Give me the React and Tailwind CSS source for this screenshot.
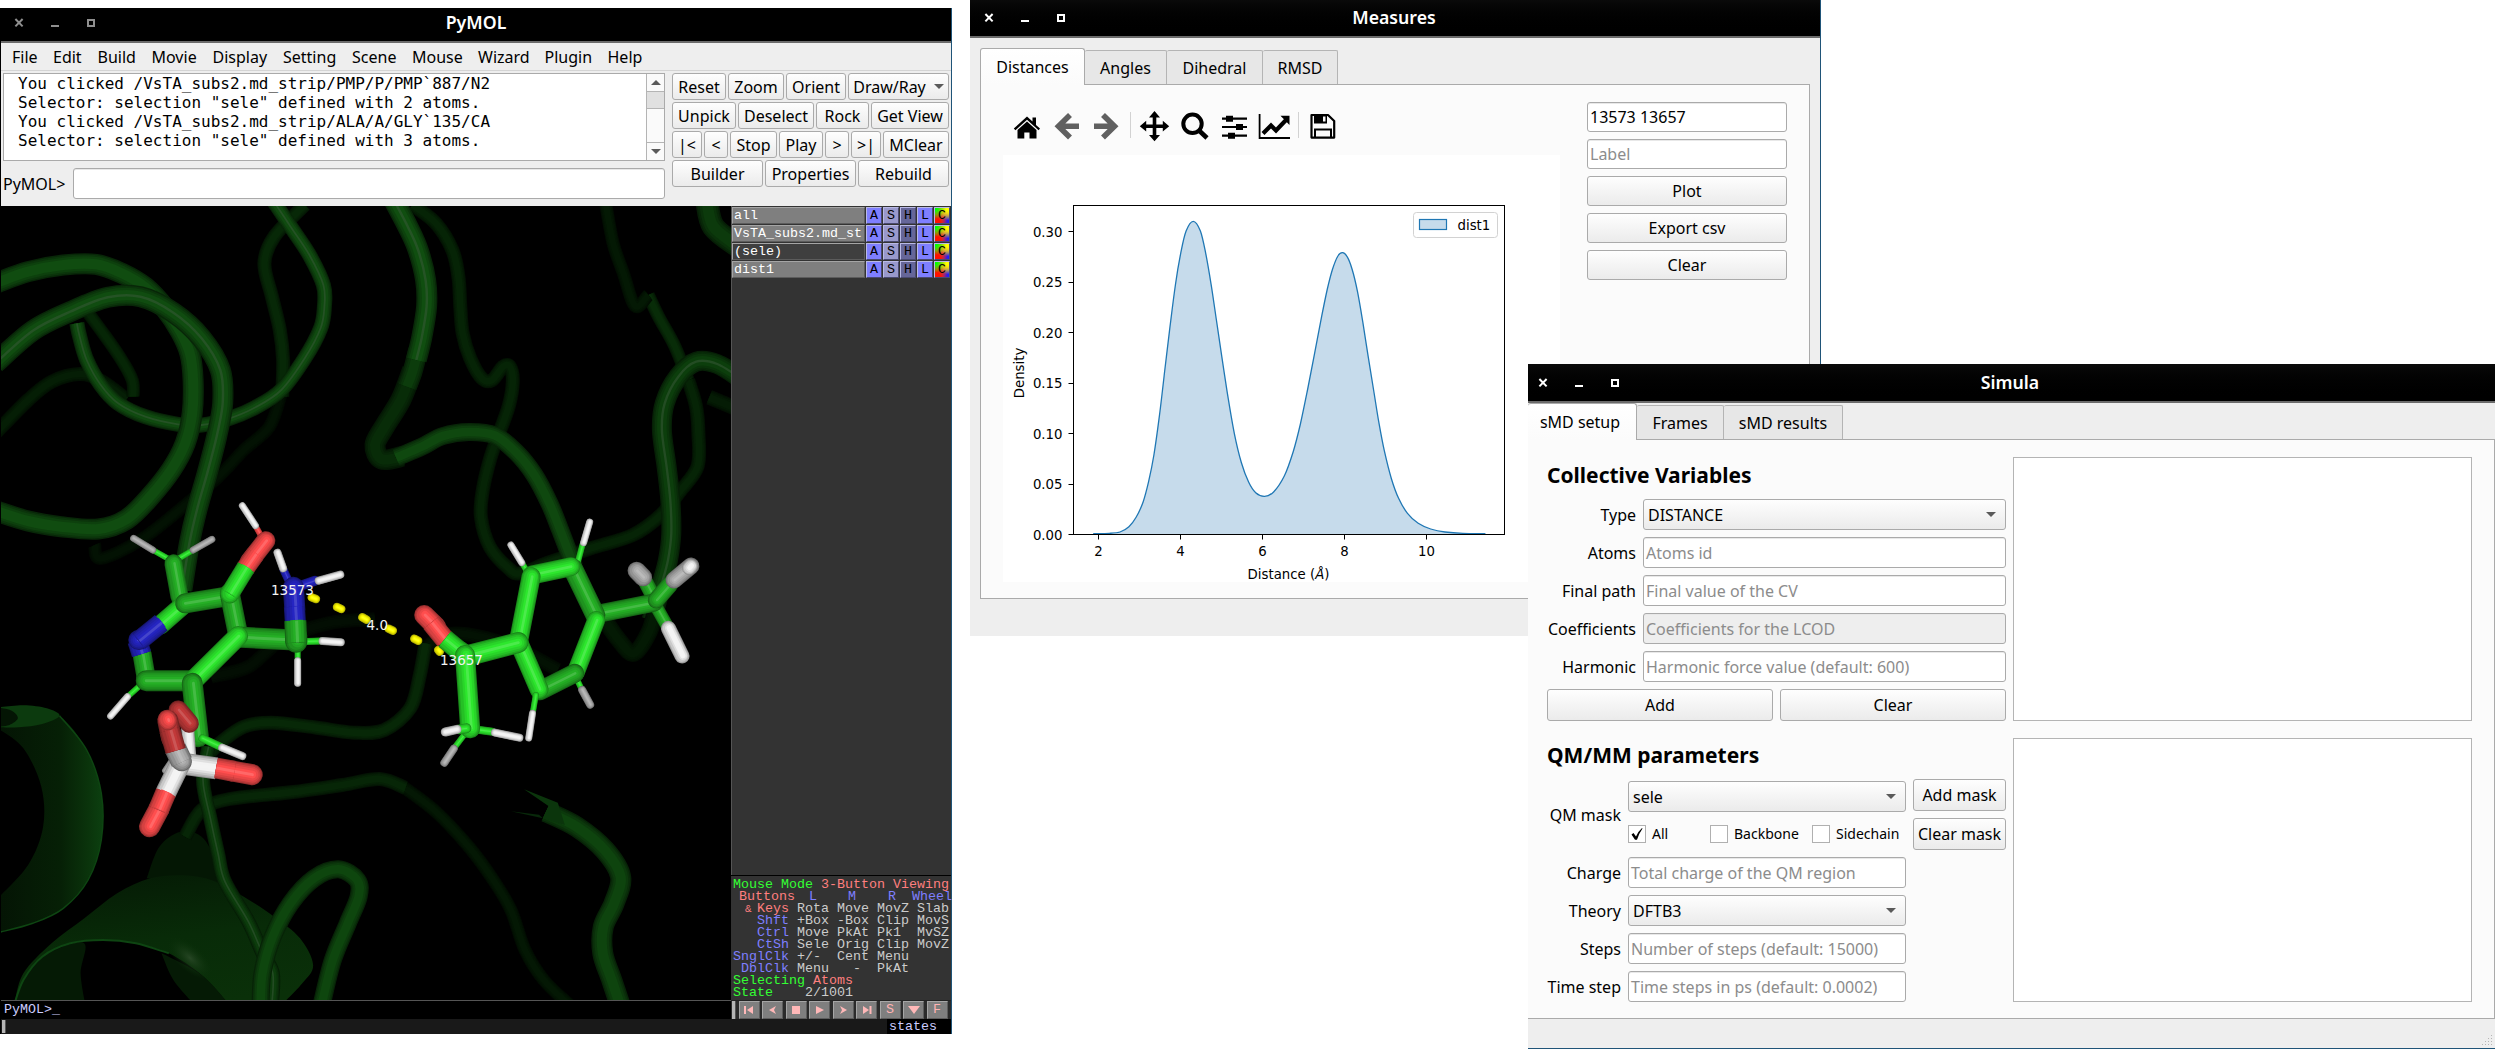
import React from "react";

/* ---------- shared widgets ---------- */

const bevel = "border border-[#aaaaaa] rounded-[3px] bg-gradient-to-b from-[#fefefe] to-[#ebebeb]";

function Button({ className = "", children }) {
  return (
    <button className={`flex items-center justify-center whitespace-nowrap leading-none ${bevel} ${className}`}>
      {children}
    </button>
  );
}

function Field({ className = "", value, placeholder, disabled }) {
  return (
    <div
      className={`flex items-center rounded-[3px] border border-[#aaaaaa] pl-[2px] leading-none whitespace-nowrap shadow-[inset_0_1px_0_#e8e8e8] ${
        disabled ? "bg-[#eeeeee]" : "bg-white"
      } ${className}`}
    >
      {value ? <span>{value}</span> : <span className="text-[#8c8c8c]">{placeholder}</span>}
    </div>
  );
}

function Caret({ up }) {
  return (
    <svg width="10" height="5" viewBox="0 0 10 5" className="shrink-0">
      <path d={up ? "M0 5 L5 0 L10 5Z" : "M0 0 L5 5 L10 0Z"} fill="#5a5a5a" />
    </svg>
  );
}

function Combo({ className = "", children }) {
  return (
    <div className={`flex items-center justify-between pl-[4px] pr-[9px] leading-none ${bevel} ${className}`}>
      <span>{children}</span>
      <Caret />
    </div>
  );
}

function TitleBar({ title, className, color = "#ffffff", icons = "left-[13px]" }) {
  return (
    <div className={`relative flex shrink-0 items-center justify-center border-b-2 border-[#6b6b6b] ${className}`}>
      <svg width="90" height="12" viewBox="0 0 90 12" className={`absolute ${icons}`}>
        <g fill="none" stroke={color}>
          <path d="M2.4 2 L9.6 9.4 M9.6 2 L2.4 9.4" strokeWidth="2" />
          <path d="M38 9 H46" strokeWidth="2" />
          <rect x="75" y="3" width="6" height="6" strokeWidth="2" />
        </g>
      </svg>
      <span className="text-[17.7px] leading-none font-semibold text-white">{title}</span>
    </div>
  );
}

function Tab({ active, className = "", children }) {
  return active ? (
    <div
      className={`relative z-10 flex h-[37px] items-center justify-center self-end rounded-t-[3px] border border-b-0 border-[#aaaaaa] bg-gradient-to-b from-white to-[#fbfbfb] leading-none ${className}`}
    >
      {children}
    </div>
  ) : (
    <div
      className={`flex h-[35px] items-center justify-center self-end rounded-t-[2px] border border-l-0 border-[#b4b4b4] border-b-[#aaaaaa] bg-[#e7e7e7] pt-px leading-none ${className}`}
    >
      {children}
    </div>
  );
}

/* ---------- molecular scene ---------- */

const U = 0.46875;
const at = ([u, v]) => [u * U, v / 3];
const lo = (pts) => pts.map(([u, v]) => [u, v + 1080]);

function spline(points) {
  const p = points.map(at);
  let d = `M${p[0][0].toFixed(1)} ${p[0][1].toFixed(1)}`;
  for (let i = 0; i < p.length - 1; i++) {
    const a = p[i - 1] || p[i];
    const b = p[i];
    const c = p[i + 1];
    const e = p[i + 2] || c;
    d += ` C${(b[0] + (c[0] - a[0]) / 6).toFixed(1)} ${(b[1] + (c[1] - a[1]) / 6).toFixed(1)} ${(
      c[0] - (e[0] - b[0]) / 6
    ).toFixed(1)} ${(c[1] - (e[1] - b[1]) / 6).toFixed(1)} ${c[0].toFixed(1)} ${c[1].toFixed(1)}`;
  }
  return d;
}

const rgb = (c, k) => `rgb(${c.map((x) => Math.min(255, Math.round(x * k))).join(",")})`;

function Tube({ pts, w, c = [16, 76, 16], shine, cap = "butt" }) {
  const d = spline(pts);
  return (
    <g fill="none" strokeLinejoin="round" strokeLinecap={cap}>
      <path d={d} stroke={rgb(c, 0.5)} strokeWidth={w} />
      <path d={d} stroke={rgb(c, 0.68)} strokeWidth={w * 0.87} />
      <path d={d} stroke={rgb(c, 0.84)} strokeWidth={w * 0.7} />
      <path d={d} stroke={rgb(c, 1)} strokeWidth={w * 0.48} />
      {shine && <path d={d} stroke="#3a5a3a" strokeOpacity="0.5" strokeWidth={w * 0.12} />}
    </g>
  );
}

const G = [44, 226, 44];
const GD = [36, 172, 36];
const RED = [250, 76, 76];
const RD = [190, 56, 56];
const BL = [36, 36, 190];
const WH = [238, 238, 238];
const GR = [172, 172, 172];

function Stick({ a, b, c, w = 18, cap = "round" }) {
  const [[x1, y1], [x2, y2]] = lo([a, b]).map(at);
  const len = Math.hypot(x2 - x1, y2 - y1) || 1;
  const ox = (Math.abs(y2 - y1) / len) * w * 0.06;
  const line = (k, f, o = 0) => (
    <line x1={x1 + o} y1={y1 - o / 2} x2={x2 + o} y2={y2 - o / 2} stroke={rgb(c, k)} strokeWidth={w * f} strokeLinecap={cap} />
  );
  return (
    <g>
      {line(0.6, 1)}
      {line(0.74, 0.9)}
      {line(0.85, 0.76)}
      {line(0.94, 0.58, ox)}
      {line(1.02, 0.36, ox)}
      <line x1={x1 + ox} y1={y1} x2={x2 + ox} y2={y2} stroke="#fff" strokeOpacity="0.15" strokeWidth={w * 0.14} strokeLinecap={cap} />
    </g>
  );
}

const backTubes = [
  { w: 14, c: [5, 30, 5], pts: [[-10, 700], [60, 600], [110, 545], [170, 522], [215, 542], [270, 598]] },
  { w: 13, c: [6, 38, 6], pts: [[165, 295], [215, 390], [255, 470], [282, 540], [284, 590]] },
  { w: 13, c: [3, 18, 3], pts: [[600, 580], [575, 680], [520, 750], [470, 825], [400, 910], [300, 1020], [215, 1075], [202, 1035]] },
  { w: 14, c: [7, 40, 7], pts: [[650, 15], [585, 110], [564, 190], [580, 290], [597, 390], [604, 480], [602, 590]] },
  { w: 14, c: [6, 36, 6], pts: [[880, 15], [930, 70], [965, 150], [978, 230], [982, 320], [987, 400], [1003, 475], [1028, 535], [1050, 540], [1073, 500], [1088, 500], [1094, 545], [1085, 620], [1062, 710], [1045, 780], [1030, 870], [1026, 950], [1045, 1040], [1085, 1105], [1110, 1120], [1170, 1088], [1260, 1045], [1350, 1005], [1410, 945], [1450, 875], [1488, 800], [1490, 700], [1485, 620], [1468, 540]] },
  { w: 13, c: [8, 44, 8], pts: [[1468, 540], [1440, 440], [1405, 350], [1383, 285]] },
  { w: 13, c: [4, 25, 4], pts: [[1383, 285], [1355, 318], [1330, 220], [1308, 130], [1292, 10]] },
  { w: 15, c: [5, 28, 5], pts: [[1513, 592], [1575, 628]] },
  { w: 23, c: [12, 58, 12], pts: [[1508, 5], [1522, 80], [1575, 140]] },
  { w: 14, c: [3, 14, 3], pts: lo([[450, 350], [530, 320], [600, 240], [700, 190], [800, 178]]) },
  { w: 14, c: [3, 18, 3], pts: lo([[900, 270], [960, 222], [1040, 235], [1110, 270], [1190, 330]]) },
];

const midTubes = [
  { w: 15, c: [16, 74, 16], shine: true, pts: [[582, 0], [620, 80], [660, 165], [690, 255], [692, 320], [684, 385], [650, 475], [600, 570], [545, 622], [490, 655], [430, 675], [380, 673], [310, 650], [252, 610], [215, 555], [185, 480], [170, 410], [164, 370]] },
  { w: 21, pts: [[-10, 250], [60, 215], [135, 195], [205, 193], [260, 220], [310, 262], [352, 325], [385, 395], [405, 460], [412, 540], [410, 640], [395, 730], [365, 810], [320, 890], [270, 958], [210, 987], [130, 980], [60, 963], [-10, 932]] },
  { w: 21, shine: true, pts: [[-10, 490], [70, 392], [150, 335], [230, 292], [300, 290], [370, 338], [430, 415], [470, 510], [475, 610], [462, 710], [442, 820], [420, 930], [404, 1030], [388, 1170]] },
  { w: 21, c: [8, 44, 8], pts: [[880, 510], [855, 600], [820, 680], [800, 735], [815, 778], [860, 768]] },
  { w: 20, c: [12, 60, 12], pts: [[892, 450], [880, 515], [868, 560]] },
  { w: 21, c: [16, 78, 16], shine: true, pts: [[840, 0], [870, 80], [892, 150], [908, 240], [910, 320], [900, 410], [888, 480]] },
  { w: 18, c: [15, 72, 15], pts: [[845, 773], [900, 740], [945, 708], [1000, 696], [1055, 706], [1100, 755], [1140, 825], [1172, 910], [1195, 990], [1225, 1100]] },
  { w: 20, c: [12, 62, 12], shine: true, pts: [[1580, 535], [1530, 492], [1485, 485], [1447, 530], [1418, 610], [1412, 690], [1422, 800], [1430, 900], [1432, 1000], [1425, 1080], [1410, 1160], [1390, 1260]] },
  { w: 17, c: [4, 26, 4], pts: lo([[1290, 180], [1320, 240], [1352, 280], [1385, 215], [1400, 140]]) },
];

const lowTubes = [
  { w: 13, c: [4, 24, 4], pts: [[860, 680], [930, 755], [1000, 860], [1050, 955], [1090, 1050], [1120, 1170], [1160, 1260], [1215, 1335]] },
  { w: 14, c: [7, 38, 7], pts: [[395, 830], [430, 750], [490, 717], [620, 697], [730, 675], [810, 657], [865, 684]] },
  { w: 14, c: [7, 40, 7], pts: [[908, 250], [895, 350], [875, 445], [820, 510], [755, 518], [670, 502], [580, 488], [520, 500], [470, 548], [440, 590]] },
  { w: 14, c: [12, 60, 12], shine: true, pts: [[445, 560], [433, 660], [448, 770], [465, 880], [480, 965], [530, 1085], [560, 1180], [582, 1240], [580, 1335]] },
  { w: 18, c: [14, 70, 14], pts: [[556, 1335], [560, 1240], [582, 1130], [620, 1030], [670, 955], [722, 928], [762, 960], [765, 1010], [742, 1090], [710, 1200], [686, 1335]] },
  { w: 21, c: [14, 68, 14], pts: [[1165, 755], [1230, 800], [1290, 870], [1324, 950], [1310, 1030], [1287, 1100], [1286, 1180], [1305, 1260], [1324, 1340]] },
];

const sticks = [
  /* pyridoxamine ring */
  [[370, 5], [326, -30], G, 6], [[326, -30], [285, -65], GR, 7],
  [[370, 5], [412, -30], G, 6], [[412, -30], [452, -62], GR, 7],
  [[370, 10], [383, 110], GD, 18],
  [[300, 375], [272, 410], G, 6], [[272, 410], [236, 468], WH, 7],
  [[312, 355], [303, 282], GD, 19],
  [[395, 130], [342, 195], G, 19],
  [[302, 282], [293, 242], BL, 20, "butt"], [[295, 240], [298, 240], BL, 20], [[296, 243], [344, 188], BL, 20, "butt"],
  [[395, 130], [490, 108], GD, 20],
  [[312, 362], [408, 362], GD, 21],
  [[548, -95], [558, -70], RED, 6], [[517, -163], [545, -103], WH, 7],
  [[532, 5], [567, -58], RED, 19], [[523, 26], [545, -18], RED, 19, "butt"],
  [[490, 100], [508, 225], GD, 20],
  [[490, 100], [490, 102], G, 19], [[490, 102], [525, 22], G, 19, "butt"],
  [[605, 30], [615, 60], BL, 8], [[592, -22], [604, 25], WH, 8],
  [[640, 78], [672, 62], BL, 10], [[680, 62], [726, 44], WH, 8],
  [[640, 245], [685, 243], G, 7], [[688, 243], [727, 247], WH, 8],
  [[635, 255], [635, 300], G, 6], [[635, 302], [635, 370], WH, 7],
  [[515, 232], [628, 240], GD, 21],
  [[629, 150], [626, 82], BL, 21], [[630, 185], [628, 140], BL, 21, "butt"],
  [[632, 245], [632, 230], GD, 22], [[632, 248], [630, 182], GD, 22, "butt"],
  [[508, 228], [412, 362], G, 20],
  [[410, 370], [423, 530], GD, 21],
  [[432, 535], [470, 560], G, 8], [[474, 563], [517, 588], WH, 8],
  /* phosphate */
  [[352, 632], [365, 605], GR, 6],
  [[400, 500], [405, 595], WH, 13, "butt"],
  [[380, 450], [404, 490], RD, 19],
  [[385, 610], [462, 625], WH, 22, "butt"], [[495, 633], [538, 644], RED, 21], [[461, 624], [500, 634], RED, 21, "butt"],
  [[388, 600], [353, 700], WH, 21, "butt"], [[340, 745], [319, 800], RED, 21], [[354, 697], [338, 750], RED, 21, "butt"],
  [[384, 600], [388, 604], GR, 20], [[374, 565], [388, 606], GR, 22, "butt"],
  [[358, 482], [366, 535], RD, 21], [[362, 510], [375, 572], RD, 21, "butt"], [[357, 478], [358, 482], RED, 19],
  /* substrate ring */
  [[1130, 48], [1115, 12], G, 6], [[1113, 8], [1090, -45], WH, 7],
  [[1232, 10], [1243, -48], G, 6], [[1245, -52], [1258, -114], WH, 7],
  [[1228, 350], [1240, 385], G, 6], [[1242, 390], [1259, 434], GR, 8],
  [[1388, 95], [1376, 62], GD, 15], [[1372, 52], [1358, 32], GR, 18],
  [[1398, 135], [1422, 195], GD, 13], [[1426, 205], [1455, 288], WH, 15],
  [[1280, 160], [1395, 128], GD, 18],
  [[1400, 120], [1428, 75], GD, 17], [[1438, 60], [1474, 18], GR, 17], [[1470, 24], [1474, 18], WH, 14],
  [[1222, 25], [1270, 165], GD, 20],
  [[1135, 45], [1218, 20], G, 19],
  [[1272, 180], [1228, 338], G, 18],
  [[1226, 340], [1152, 392], GD, 19],
  [[1133, 50], [1106, 245], G, 19],
  [[1106, 245], [1150, 388], G, 19],
  [[1143, 405], [1137, 455], G, 6], [[1136, 460], [1128, 534], WH, 7],
  [[1105, 248], [995, 288], G, 21],
  [[930, 200], [905, 165], RED, 20], [[950, 240], [920, 188], RED, 20, "butt"],
  [[988, 280], [980, 272], G, 20], [[988, 282], [949, 237], G, 20, "butt"],
  [[990, 525], [970, 562], G, 6], [[968, 566], [948, 608], GR, 8],
  [[1012, 508], [1050, 515], G, 8], [[1056, 518], [1108, 533], WH, 8],
  [[992, 285], [1003, 505], G, 20],
  [[995, 505], [980, 508], G, 10], [[975, 508], [950, 516], WH, 9],
];

const dashes = [
  [[665, 112], [674, 117]], [[719, 141], [728, 147]], [[773, 172], [782, 179]],
  [[829, 206], [838, 212]], [[884, 236], [892, 242]], [[935, 270], [938, 275]],
];

function MoleculeScene() {
  return (
    <svg width="730" height="794" viewBox="1 6 730 794" className="block bg-black">
      <defs>
        <linearGradient id="helixLeft" x1="0" x2="1" y1="0" y2="0">
          <stop offset="0" stopColor="#041404" />
          <stop offset="0.6" stopColor="#062006" />
          <stop offset="0.85" stopColor="#0a330b" />
          <stop offset="1" stopColor="#0c4010" />
        </linearGradient>
        <linearGradient id="helixBottom" x1="0.3" x2="0.6" y1="0" y2="1">
          <stop offset="0" stopColor="#051b05" />
          <stop offset="0.5" stopColor="#082b08" />
          <stop offset="1" stopColor="#0a3009" />
        </linearGradient>
        <radialGradient id="helixGlow">
          <stop offset="0" stopColor="#264624" />
          <stop offset="1" stopColor="#0a3009" stopOpacity="0" />
        </radialGradient>
      </defs>

      {backTubes.map((t, i) => <Tube key={i} {...t} />)}
      {midTubes.map((t, i) => <Tube key={i} {...t} />)}

      {/* helix on the left edge */}
      <path
        d={`${spline(lo([[-5, 445], [60, 438], [127, 467], [185, 570], [216, 700], [216, 840], [188, 960], [135, 1045], [70, 1090], [-5, 1118]]))} L-2 697 ${spline(
          lo([[-5, 1015], [60, 915], [92, 800], [88, 680], [50, 565], [-5, 505]])
        ).replace("M", "L")} Z`}
        fill="url(#helixLeft)"
      />
      <path d={`${spline(lo([[127, 467], [185, 570], [216, 700], [216, 840], [188, 960], [135, 1045], [70, 1090], [-5, 1118]]))}`} fill="none" stroke="#0e4512" strokeWidth="1.5" />
      <path d={`${spline(lo([[-5, 442], [50, 436], [100, 445], [127, 467], [90, 492], [40, 502], [-5, 502]]))} Z`} fill="#0c3a0e" />
      <path d={`${spline(lo([[-5, 442], [25, 452], [38, 475], [20, 495], [-5, 500]]))} Z`} fill="#041504" />

      {/* helix at the bottom */}
      <path d={`${spline(lo([[313, 955], [340, 860], [385, 815], [430, 830], [460, 900], [470, 970]]))} Z`} fill="#041704" />
      <path
        d={`${spline(lo([[30, 1335], [50, 1240], [110, 1150], [180, 1075], [250, 1000], [320, 955], [390, 946], [455, 962], [520, 1010], [585, 1070], [640, 1135], [668, 1215], [645, 1270], [600, 1335]]))} L229 805 ${spline(
          lo([[490, 1335], [430, 1245], [360, 1180], [290, 1150], [220, 1140], [150, 1150], [90, 1190], [50, 1260], [32, 1335]])
        ).replace("M", "L")} Z`}
        fill="url(#helixBottom)"
      />
      <path d={`${spline(lo([[32, 1335], [50, 1260], [90, 1190], [178, 1148], [172, 1240], [182, 1335]]))} Z`} fill="#051a05" />
      <path d={`${spline(lo([[345, 1182], [370, 1260], [415, 1335]]))} L229 805 ${spline(lo([[490, 1335], [430, 1245], [345, 1180]])).replace("M", "L")} Z`} fill="#051a05" />
      <ellipse cx="190" cy="758" rx="28" ry="13" transform="rotate(42 190 758)" fill="url(#helixGlow)" />
      <path d={spline(lo([[30, 1335], [50, 1260], [90, 1190], [150, 1150], [220, 1140], [290, 1150], [360, 1180]]))} fill="none" stroke="#0e4512" strokeWidth="2" />

      {lowTubes.map((t, i) => <Tube key={i} {...t} pts={lo(t.pts)} />)}
      <polygon points={lo([[1118, 688], [1190, 728], [1205, 795], [1158, 775], [1170, 738]]).map(at).join(" ")} fill="#0b350c" />
      <polygon points={lo([[1090, 754], [1150, 764], [1158, 775]]).map(at).join(" ")} fill="#08280a" />

      {dashes.map(([a, b], i) => <Stick key={i} a={a} b={b} c={[255, 250, 0]} w={8.5} />)}
      {sticks.map(([a, b, c, w, cap], i) => <Stick key={i} a={a} b={b} c={c} w={w} cap={cap} />)}

      <g fill="#f4f4f4" fontFamily="DejaVu Sans, sans-serif" fontSize="13.5">
        <text x="271" y="395">13573</text>
        <text x="366.5" y="430">4.0</text>
        <text x="440" y="465">13657</text>
      </g>
    </svg>
  );
}

/* ---------- PyMOL side panel ---------- */

function ObjectRow({ name, dark }) {
  const key = "flex h-[17px] w-[16px] shrink-0 items-center justify-center border border-t-[#b9b9e6] border-l-[#b9b9e6] border-r-[#4a4a70] border-b-[#4a4a70] text-black";
  return (
    <div className="flex h-[17px] gap-px">
      <div
        className={`flex w-[133px] items-center overflow-hidden border border-t-[#a5a5a5] border-l-[#a5a5a5] border-r-[#5c5c5c] border-b-[#5c5c5c] pl-px whitespace-pre text-white ${
          dark ? "bg-[#3f3f3f]" : "bg-[#7f7f7f]"
        }`}
      >
        {name}
      </div>
      <div className={`${key} bg-[#7f7fff]`}>A</div>
      <div className={`${key} bg-[#9999cc]`}>S</div>
      <div className={`${key} bg-[#666699]`}>H</div>
      <div className={`${key} bg-[#7f7fff]`}>L</div>
      <div className={`${key} bg-[radial-gradient(circle_at_0%_0%,#00ff00_10%,transparent_55%),radial-gradient(circle_at_100%_0%,#ffff00_15%,transparent_60%),radial-gradient(circle_at_0%_100%,#ff1000_25%,transparent_65%),radial-gradient(circle_at_100%_100%,#1e1eff_15%,transparent_60%),linear-gradient(#ff9020,#ff9020)]`}>C</div>
    </div>
  );
}

const mouseRows = [
  ["Shft", "+Box", "-Box", "Clip", "MovS"],
  ["Ctrl", "Move", "PkAt", "Pk1", "MvSZ"],
  ["CtSh", "Sele", "Orig", "Clip", "MovZ"],
  ["SnglClk", "+/-", "Cent", "Menu", ""],
  ["DblClk", "Menu", "  -", "PkAt", ""],
];
const mouseGrid = "grid h-[12px] grid-cols-[56px_40px_40px_40px_36px] gap-x-0 whitespace-pre";

function MousePanel() {
  return (
    <div className="flex h-[125px] flex-col border-t border-black pt-[3px] pl-[2px] text-[#cccccc] leading-[12px]">
      <div className="h-[12px] whitespace-pre"><span className="text-[#33ff33]">Mouse Mode </span><span className="text-[#ff7f7f]">3-Button Viewing</span></div>
      <div className={`${mouseGrid} text-[#7f7fff]`}>
        <span className="pl-[6px] text-[#ff7f7f]">Buttons</span>
        <span className="pl-[20px]">L</span><span className="pl-[19px]">M</span><span className="pl-[19px]">R</span><span className="pl-[3px]">Wheel</span>
      </div>
      <div className={mouseGrid}>
        <span className="flex justify-between pl-[12px] text-[#ff7f7f]"><span className="text-[11px]">&amp;</span>Keys</span>
        <span className="pl-[8px]">Rota</span><span className="pl-[8px]">Move</span><span className="pl-[8px]">MovZ</span><span className="pl-[8px]">Slab</span>
      </div>
      {mouseRows.map((r) => (
        <div key={r[0]} className={mouseGrid}>
          <span className="text-right text-[#7f7fff]">{r[0]}</span>
          {r.slice(1).map((t, i) => <span key={i} className="pl-[8px]">{t}</span>)}
        </div>
      ))}
      <div className="h-[12px] whitespace-pre"><span className="text-[#33ff33]">Selecting </span><span className="text-[#ff7f7f]">Atoms</span></div>
      <div className="h-[12px] whitespace-pre"><span className="text-[#33ff33]">State</span><span className="pl-[32px]">2/1001</span></div>
    </div>
  );
}

const playerIcons = [
  <path d="M1 2h2v8h-2z M10 2 L4 6 L10 10z" />,
  <path d="M9 2 L2 6 L9 10 L7 6z" />,
  <path d="M2 2h8v8h-8z" />,
  <path d="M2 2 L10 6 L2 10z" />,
  <path d="M3 2 L10 6 L3 10 L5 6z" />,
  <path d="M2 2 L8 6 L2 10z M8.5 2h2v8h-2z" />,
  "S",
  <path d="M0 2 H12 L6 10z" />,
  "F",
];

function Player() {
  return (
    <div className="flex h-[19px] items-stretch gap-[1.5px] border-t border-[#222222] bg-[#2b2b2b] pl-px">
      <div className="w-[4px] border-r border-[#555] bg-[#b5b5b5]" />
      {playerIcons.map((ic, i) => (
        <div key={i} className="ml-px flex w-[21px] items-center justify-center border border-t-[#a5a5a5] border-l-[#a5a5a5] border-r-[#5c5c5c] border-b-[#5c5c5c] bg-[#7f7f7f] text-[#ffb3b3]">
          {typeof ic === "string" ? ic : <svg width="12" height="12" viewBox="0 0 12 12" fill="#ffb8b8">{ic}</svg>}
        </div>
      ))}
    </div>
  );
}

const menus = [
  ["File", "w-[41px]"], ["Edit", "w-[44.5px]"], ["Build", "w-[54px]"], ["Movie", "w-[61px]"], ["Display", "w-[70.5px]"],
  ["Setting", "w-[69px]"], ["Scene", "w-[60px]"], ["Mouse", "w-[66px]"], ["Wizard", "w-[66.5px]"], ["Plugin", "w-[63px]"], ["Help", "w-[60px]"],
];

function PyMolWindow() {
  return (
    <section className="absolute top-[8px] left-0 flex h-[1026px] w-[952px] flex-col border-r border-l border-r-[#1f5478] border-l-black bg-[#eeeeee]">
      <TitleBar title="PyMOL" className="h-[35px] bg-black pb-[3px]" icons="left-[12px]" color="#8f8f8f" />
      <nav className="flex h-[28px] shrink-0 items-center border-b border-[#d4d4d4] pl-[11px]">
        {menus.map(([m, w]) => <span key={m} className={`${w} leading-none`}>{m}</span>)}
      </nav>
      <div className="flex h-[135px] shrink-0 pt-[2px] pl-[2px]">
        <div className="w-[662px]">
          <div className="flex h-[88px] border border-[#aaaaaa] bg-white">
            <pre className="flex-1 pl-[14px] font-['DejaVu_Sans_Mono',monospace] text-[16px] leading-[19px]">
{`You clicked /VsTA_subs2.md_strip/PMP/P/PMP\`887/N2
Selector: selection "sele" defined with 2 atoms.
You clicked /VsTA_subs2.md_strip/ALA/A/GLY\`135/CA
Selector: selection "sele" defined with 3 atoms.`}
            </pre>
            <div className="flex w-[18px] flex-col border-l border-[#b4b4b4] bg-[#fafafa]">
              <div className="flex h-[18px] items-center justify-center border-b border-[#b4b4b4]"><Caret up /></div>
              <div className="h-[17px] border-b border-[#b4b4b4] bg-[#e0e0e0]" />
              <div className="flex-1" />
              <div className="flex h-[18px] items-center justify-center border-t border-[#b4b4b4]"><Caret /></div>
            </div>
          </div>
          <div className="mt-[7px] flex h-[31px] items-center">
            <span className="w-[70px] leading-none">PyMOL&gt;</span>
            <Field className="h-full flex-1" />
          </div>
        </div>
        <div className="ml-[7px] flex w-[277px] flex-col gap-[2px]">
          <div className="flex h-[27px] gap-[2px]">
            <Button className="w-[54px]">Reset</Button>
            <Button className="w-[56px]">Zoom</Button>
            <Button className="w-[60px]">Orient</Button>
            <Button className="flex-1 gap-[8px]">Draw/Ray<Caret /></Button>
          </div>
          <div className="flex h-[27px] gap-[2px]">
            <Button className="w-[64px]">Unpick</Button>
            <Button className="w-[76px]">Deselect</Button>
            <Button className="w-[53px]">Rock</Button>
            <Button className="flex-1">Get View</Button>
          </div>
          <div className="flex h-[27px] gap-[2px]">
            <Button className="w-[30px]">|&lt;</Button>
            <Button className="w-[24px]">&lt;</Button>
            <Button className="w-[47px]">Stop</Button>
            <Button className="w-[44px]">Play</Button>
            <Button className="w-[24px]">&gt;</Button>
            <Button className="w-[30px]">&gt;|</Button>
            <Button className="flex-1">MClear</Button>
          </div>
          <div className="flex h-[27px] gap-[2px]">
            <Button className="flex-1">Builder</Button>
            <Button className="w-[91px]">Properties</Button>
            <Button className="flex-1">Rebuild</Button>
          </div>
        </div>
      </div>
      <div className="flex h-[813px] bg-black font-['Liberation_Mono',monospace] text-[13.33px] leading-none">
        <div className="w-[730px]">
          <MoleculeScene />
          <div className="flex h-[19px] items-center border-t border-[#555555] bg-black pl-[3px] text-[#ccccff]">PyMOL&gt;_</div>
        </div>
        <div className="flex flex-1 flex-col bg-[#333333]">
          <div className="flex flex-1 flex-col gap-px border-l border-[#555555] pt-px">
            <ObjectRow name="all" />
            <ObjectRow name="VsTA_subs2.md_st" />
            <ObjectRow name="(sele)" dark />
            <ObjectRow name="dist1" />
          </div>
          <MousePanel />
          <Player />
        </div>
      </div>
      <div className="flex h-[15px] items-stretch justify-between bg-[#191919] pl-px font-['Liberation_Mono',monospace] text-[13.33px] leading-none">
        <div className="my-px w-[4px] border-r border-[#555] bg-[#b5b5b5]" />
        <div className="flex w-[64px] items-center bg-black pl-[2px] text-[#ccccff]">states</div>
      </div>
    </section>
  );
}

/* ---------- Measures window ---------- */

function PlotToolbar() {
  return (
    <svg width="340" height="34" viewBox="1005 109 340 34" className="block">
      <g fill="#000">
        <path d="M1027 116.5 L1013.8 128.6 L1015.4 130.3 L1027 119.8 L1038.6 130.3 L1040 128.6 L1036 125 V117.5 H1032.5 V121.6z" />
        <path d="M1027 121.5 L1017.5 130 V138.6 H1024.3 V132.5 H1029.5 V138.6 H1036.5 V130z" />
      </g>
      <g fill="none" stroke="#606060" strokeWidth="5.6">
        <path d="M1070 115 L1058.5 126.3 L1070 137.6 M1059 126.3 H1079" />
        <path d="M1103 115 L1114.5 126.3 L1103 137.6 M1114 126.3 H1094" />
      </g>
      <path d="M1130.5 112 V138 M1298.5 112 V138" stroke="#d2d2d2" />
      <g>
        <path d="M1154.5 115 V137 M1144 126.2 H1165" stroke="#000" strokeWidth="3.6" />
        <path d="M1154.5 111 L1160 117.5 H1149z M1154.5 141.3 L1160 135 H1149z M1139.8 126.2 L1146.2 120.8 V131.6z M1169.2 126.2 L1162.8 120.8 V131.6z" />
      </g>
      <circle cx="1192.5" cy="123.8" r="9.2" fill="none" stroke="#000" strokeWidth="4" />
      <path d="M1199 130.5 L1207 138" stroke="#000" strokeWidth="4.6" />
      <path d="M1222 118.7 H1247 M1222 127 H1247 M1222 135.7 H1247" stroke="#000" strokeWidth="2.2" />
      <path d="M1226 115.8 h7v6h-7z M1236 124h7v6h-7z M1228 132.8h7v6h-7z" />
      <path d="M1259.6 114 V138 H1290" fill="none" stroke="#000" strokeWidth="1.8" />
      <path d="M1263 133.5 L1271 125.5 L1276 130.5 L1286.5 119.5" fill="none" stroke="#000" strokeWidth="4.2" />
      <path d="M1280.5 115.8 H1289.5 V125z" />
      <path d="M1311.5 115 H1328 L1334.2 121 V137.6 H1311.5z" fill="none" stroke="#000" strokeWidth="2.2" strokeLinejoin="round" />
      <path d="M1315 137 V129.5 H1331 V137" fill="none" stroke="#000" strokeWidth="2" />
      <path d="M1314 115 h13 v8.5 h-13z M1323 116.5 v5 h2.5 v-5z" fillRule="evenodd" />
    </svg>
  );
}

const density = [
  [345, 1091], [390, 1090], [420, 1086], [445, 1070], [465, 1042], [485, 995], [500, 935], [515, 855], [530, 740], [545, 605], [560, 470],
  [575, 345], [590, 250], [605, 183], [625, 154], [645, 183], [660, 250], [675, 343], [690, 450], [705, 560], [720, 665], [740, 790],
  [760, 878], [780, 936], [800, 968], [825, 979], [850, 966], [880, 918], [905, 845], [925, 762], [945, 660], [965, 550], [985, 437],
  [1000, 360], [1015, 298], [1030, 258], [1043, 248], [1056, 260], [1070, 298], [1085, 365], [1100, 458], [1115, 560], [1130, 660],
  [1145, 758], [1160, 842], [1180, 926], [1200, 985], [1225, 1030], [1255, 1060], [1290, 1077], [1330, 1086], [1380, 1090], [1443, 1091],
].map(([x, y]) => [(970 + x / 2.8) / U, (170 + y / 3) * 3]);

function DensityPlot() {
  const curve = spline(density);
  const yt = ["0.00", "0.05", "0.10", "0.15", "0.20", "0.25", "0.30"];
  const xt = ["2", "4", "6", "8", "10"];
  return (
    <svg width="557" height="427" viewBox="1003 155 557 427" className="block bg-white" fontFamily="DejaVu Sans, sans-serif" fontSize="13.3">
      <path d={`${curve} L1485 534 L1093 534Z`} fill="#c6dbeb" />
      <path d={curve} fill="none" stroke="#1f77b4" strokeWidth="1.3" />
      <rect x="1073.5" y="205.5" width="431" height="329" fill="none" stroke="#000" />
      {yt.map((t, i) => (
        <g key={t}>
          <path d={`M1068.5 ${Math.round(534 - i * 50.45) + 0.5} h5`} stroke="#000" />
          <text x="1062.5" y={539.7 - i * 50.45} textAnchor="end">{t}</text>
        </g>
      ))}
      {xt.map((t, i) => (
        <g key={t}>
          <path d={`M${Math.round(1098 + i * 82) + 0.5} 534.5 v5`} stroke="#000" />
          <text x={1098.5 + i * 82} y="556" textAnchor="middle">{t}</text>
        </g>
      ))}
      <text x="1288.5" y="578.5" textAnchor="middle">Distance (<tspan fontStyle="italic">Å</tspan>)</text>
      <text transform="translate(1023.5 373) rotate(-90)" textAnchor="middle">Density</text>
      <rect x="1413.5" y="212.5" width="84" height="25" rx="3" fill="#fff" stroke="#d2d2d2" />
      <rect x="1419.5" y="219.5" width="27" height="10" fill="#c6dbeb" stroke="#1f77b4" strokeWidth="1.2" />
      <text x="1457.5" y="230">dist1</text>
    </svg>
  );
}

function MeasuresWindow() {
  return (
    <section className="absolute top-0 left-[970px] flex h-[636px] w-[851px] flex-col border-r border-[#1f5478] bg-[#eeeeee]">
      <TitleBar title="Measures" className="h-[38px] bg-gradient-to-b from-[#0a0a0a] to-black pr-[2px]" />
      <div className="flex h-[47px] shrink-0 pl-[10px]">
        <Tab active className="w-[105px]">Distances</Tab>
        <Tab className="w-[82px]">Angles</Tab>
        <Tab className="w-[96px]">Dihedral</Tab>
        <Tab className="w-[75px]">RMSD</Tab>
      </div>
      <div className="mx-[10px] mt-[-1px] flex h-[515px] border border-[#aaaaaa] bg-[#fbfbfb]">
        <div className="flex flex-col pt-[24px] pl-[22px]">
          <div className="h-[46px] pl-[2px]"><PlotToolbar /></div>
          <DensityPlot />
        </div>
        <div className="ml-[27px] flex w-[200px] flex-col gap-[7px] pt-[17px]">
          <Field className="h-[30px]" value="13573 13657" />
          <Field className="h-[30px]" placeholder="Label" />
          <Button className="h-[30px]">Plot</Button>
          <Button className="h-[30px]">Export csv</Button>
          <Button className="h-[30px]">Clear</Button>
        </div>
      </div>
    </section>
  );
}

/* ---------- Simula window ---------- */

function Row({ label, labelWidth, children }) {
  return (
    <div className="flex h-[31px] items-center gap-[7px]">
      <span className={`${labelWidth} text-right leading-none whitespace-nowrap`}>{label}</span>
      {children}
    </div>
  );
}

function Check({ checked, className = "", children }) {
  return (
    <div className={`flex items-center gap-[6px] text-[14px] leading-none ${className}`}>
      <span className="flex size-[18px] items-center justify-center border border-[#b0b0b0] bg-white">
        {checked && (
          <svg width="14" height="14" viewBox="0 0 14 14"><path d="M1.5 7.5 L3.5 6 L6 9.5 Q8 4.5 12 1 L12.5 1.6 Q9 6.5 7 12.8 H5z" /></svg>
        )}
      </span>
      {children}
    </div>
  );
}

function SimulaWindow() {
  return (
    <section className="absolute top-[364px] left-[1528px] flex h-[685px] w-[967px] flex-col border-b border-[#1f5478] bg-[#eeeeee]">
      <TitleBar title="Simula" className="h-[39px] bg-gradient-to-b from-[#0a0a0a] to-black pr-[3px]" icons="left-[9px]" />
      <div className="flex h-[37px] shrink-0">
        <Tab active className="w-[109px] border-l-0 pr-[4px]">sMD setup</Tab>
        <Tab className="w-[87px]">Frames</Tab>
        <Tab className="w-[119px]">sMD results</Tab>
      </div>
      <div className="mt-[-1px] flex h-[580px] gap-[7px] border border-l-0 border-[#aaaaaa] bg-[#fbfbfb] pt-[17px] pl-[19px]">
        <div className="flex w-[459px] flex-col">
          <h2 className="flex h-[42px] items-center pb-[6px] text-[21px] leading-none font-bold">Collective Variables</h2>
          <div className="flex flex-col gap-[7px]">
            <Row label="Type" labelWidth="w-[89px]"><Combo className="h-full flex-1">DISTANCE</Combo></Row>
            <Row label="Atoms" labelWidth="w-[89px]"><Field className="h-full flex-1" placeholder="Atoms id" /></Row>
            <Row label="Final path" labelWidth="w-[89px]"><Field className="h-full flex-1" placeholder="Final value of the CV" /></Row>
            <Row label="Coefficients" labelWidth="w-[89px]"><Field disabled className="h-full flex-1" placeholder="Coefficients for the LCOD" /></Row>
            <Row label="Harmonic" labelWidth="w-[89px]"><Field className="h-full flex-1" placeholder="Harmonic force value (default: 600)" /></Row>
            <div className="flex h-[32px] gap-[7px]">
              <Button className="flex-1">Add</Button>
              <Button className="flex-1">Clear</Button>
            </div>
          </div>
          <h2 className="mt-[17px] flex h-[41px] items-center pb-[6px] text-[21px] leading-none font-bold">QM/MM parameters</h2>
          <div className="flex h-[71px] items-center gap-[7px]">
            <span className="w-[74px] text-right leading-none whitespace-nowrap">QM mask</span>
            <div className="flex h-full w-[278px] flex-col pt-[2px]">
              <Combo className="h-[31px]">sele</Combo>
              <div className="mt-[13px] flex">
                <Check checked className="w-[82px]">All</Check>
                <Check className="w-[102px]">Backbone</Check>
                <Check>Sidechain</Check>
              </div>
            </div>
            <div className="flex h-full flex-1 flex-col gap-[7px]">
              <Button className="h-[32px]">Add mask</Button>
              <Button className="h-[32px]">Clear mask</Button>
            </div>
          </div>
          <div className="mt-[7px] flex w-[359px] flex-col gap-[7px]">
            <Row label="Charge" labelWidth="w-[74px]"><Field className="h-full flex-1" placeholder="Total charge of the QM region" /></Row>
            <Row label="Theory" labelWidth="w-[74px]"><Combo className="h-full flex-1">DFTB3</Combo></Row>
            <Row label="Steps" labelWidth="w-[74px]"><Field className="h-full flex-1" placeholder="Number of steps (default: 15000)" /></Row>
            <Row label="Time step" labelWidth="w-[74px]"><Field className="h-full flex-1" placeholder="Time steps in ps (default: 0.0002)" /></Row>
          </div>
        </div>
        <div className="flex w-[459px] flex-col gap-[17px]">
          <div className="h-[264px] border border-[#b4b4b4] bg-white" />
          <div className="h-[264px] border border-[#b4b4b4] bg-white" />
        </div>
      </div>
      <div className="flex flex-1 items-end justify-end p-[2px]">
        <svg width="11" height="11" viewBox="0 0 11 11" fill="#b5b5b5">
          <path d="M9 0h1v1h-1z M6 3h1v1h-1z M9 3h1v1h-1z M3 6h1v1h-1z M6 6h1v1h-1z M9 6h1v1h-1z M0 9h1v1h-1z M3 9h1v1h-1z M6 9h1v1h-1z M9 9h1v1h-1z" />
        </svg>
      </div>
    </section>
  );
}

export default function App() {
  return (
    <main className="relative h-[1049px] w-[2495px] overflow-hidden bg-white font-['Noto_Sans',sans-serif] text-[16px] text-black">
      <PyMolWindow />
      <MeasuresWindow />
      <SimulaWindow />
    </main>
  );
}
